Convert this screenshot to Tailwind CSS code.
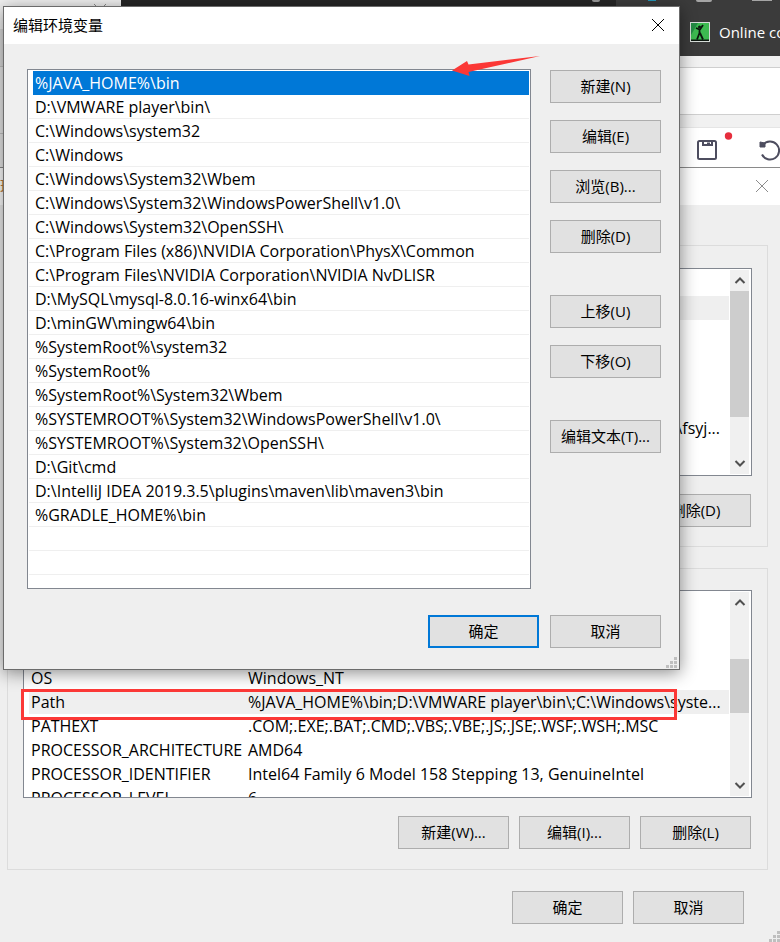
<!DOCTYPE html>
<html lang="zh-CN">
<head>
    <meta charset="UTF-8">
    <meta name="viewport" content="width=device-width, initial-scale=1.0">
    <title>编辑环境变量</title>
    <script src="https://cdn.jsdelivr.net/npm/@tailwindcss/browser@4"></script>
</head>
<body class="font-['Open_Sans','Noto_Sans_CJK_SC',sans-serif] text-[15px] leading-6 text-black">
    <div class="relative h-screen overflow-hidden bg-[#f1f1f1]">

        <!-- Browser behind the dialogs -->
        <div class="h-14 bg-[#3b3b3b] flex flex-col">
            <div class="h-2 flex">
                <div class="w-[121px] bg-[#f1f1f1] pl-[94px] pt-1"><svg class="w-3 h-3" viewBox="0 0 12 12" stroke="#8c8c8c"><path d="M0 0L12 12M12 0L0 12"/></svg></div>
                <div class="w-[495px] bg-[#262626] flex justify-end pr-4"><div class="w-2 h-[2px] rounded-b-full bg-[#9a9a9a]"></div></div>
                <div class="flex-1 flex justify-between pl-8 pr-2">
                    <div class="w-2 h-px bg-[#2596b8]"></div>
                    <div class="w-4 h-[2px] rounded-b bg-[#a5a5a5]"></div>
                    <div class="w-5 h-px bg-[#a5a5a5]"></div>
                </div>
            </div>
            <a href="#" class="flex items-center gap-[9px] ml-auto h-12 w-[90px] text-white whitespace-nowrap overflow-hidden">
                <svg class="w-5 h-5 shrink-0" viewBox="0 0 20 20">
                    <rect x="0.500" y="0.500" width="19" height="19" fill="#3cba50" stroke="#d5dcd8"/>
                    <path d="M1 1h7L1 13z" fill="#238a43"/>
                    <path d="M1 17.500h18V19H1z" fill="#0b160e"/>
                    <circle cx="9.500" cy="5" r="1.500" fill="#0b160e"/>
                    <path d="M9.500 7v5M9.500 7.500L6 6M10 7.500L13 3M9.500 11L7 17.500M10 11l3 6.500" fill="none" stroke="#0b160e" stroke-width="1.800"/>
                </svg>
                <span>Online co</span>
            </a>
        </div>
        <div class="h-3 bg-[#f1f1f1] border-b border-[#cfcfcf]"></div>
        <div class="h-[47px] bg-white border-b border-[#cfcfcf]"></div>
        <div class="mt-3 h-12 bg-white border-t border-[#e5e5e5] flex justify-end">
            <svg class="w-[90px] h-12" viewBox="0 0 90 48" fill="none" stroke="#4d4d5f" stroke-width="2">
                <rect x="8" y="13" width="18" height="18" rx="1.500"/>
                <path d="M13 13v4h9v-4M17 15.500h3"/>
                <circle cx="38.500" cy="8" r="3.700" fill="#e62e3d" stroke="none"/>
                <path d="M73 17a9 9 0 1 1 -1 9.500"/>
                <path d="M70 14l5 1v4h-5z" fill="#4d4d5f" stroke-width="1"/>
            </svg>
        </div>
        <!-- Left edge of the window behind -->
        <div class="absolute left-0 top-0 w-[3px] h-[167px] bg-[#e9e9e9] flex flex-col">
            <div class="h-[29px] bg-[#f1f1f1]"></div>
            <div class="h-[38px] bg-[#dcdcdc] border-b border-[#c4c4c4]"></div>
            <div class="h-[67px] border-b border-[#c4c4c4]"></div>
        </div>

        <!-- Environment variables dialog -->
        <section class="absolute inset-x-0 top-[167px] bottom-0 bg-[#efefef] border-t border-[#8a8a8a] flex flex-col">
            <header class="h-[37px] bg-white flex justify-between items-center pr-3 pb-px">
                <span class="text-[#c07a3a]">环</span>
                <button aria-label="关闭"><svg class="w-3 h-3" viewBox="0 0 12 12" stroke="#8c8c8c"><path d="M0 0L12 12M12 0L0 12"/></svg></button>
            </header>
            <fieldset class="mt-10 ml-[7px] mr-3 h-[302px] border border-[#dcdcdc] px-[15px] pt-[22px]">
                <div class="h-[208px] bg-white border border-[#828790] flex justify-end">
                    <div class="flex-1 pt-[27px]">
                        <div class="h-6 bg-[#efefef]"></div>
                        <div class="pt-24 pr-[9px] text-right text-base">\fsyj...</div>
                    </div>
                    <div class="w-5 my-px mr-[2px] bg-[#f0f0f0] flex flex-col items-center border-l border-white">
                        <svg class="w-5 h-[21px]" viewBox="0 0 20 21" fill="none" stroke="#505050" stroke-width="2"><path d="M5.500 13L10 8.500l4.500 4.500"/></svg>
                        <div class="w-full h-[126px] bg-[#cdcdcd]"></div>
                        <svg class="w-5 h-[21px] mt-auto" viewBox="0 0 20 21" fill="none" stroke="#505050" stroke-width="2"><path d="M5.500 8L10 12.500 14.500 8"/></svg>
                    </div>
                </div>
                <div class="mt-[18px] flex justify-end pr-px">
                    <button class="w-[111px] h-[33px] pb-[2px] bg-[#e1e1e1] border border-[#adadad]">删除(D)</button>
                </div>
            </fieldset>
            <fieldset class="mt-[21px] ml-[7px] mr-3 h-[302px] border border-[#dcdcdc] px-[15px] pt-[21px]">
                <div class="h-[208px] bg-white border border-[#828790] flex">
                    <div class="flex-1 min-w-0 pt-[75px] overflow-hidden">
                        <table class="w-full table-fixed whitespace-nowrap border-separate border-spacing-0 text-base">
                            <colgroup><col class="w-[217px]"><col></colgroup>
                            <tr class="h-6"><td class="border-l-5 border-white pl-[2px]">OS</td><td class="pl-[7px]">Windows_NT</td></tr>
                            <tr class="h-6 bg-[#efefef]"><td class="border-l-5 border-white pl-[2px]">Path</td><td class="pl-[7px]">%JAVA_HOME%\bin;D:\VMWARE player\bin\;C:\Windows\syste...</td></tr>
                            <tr class="h-6"><td class="border-l-5 border-white pl-[2px]">PATHEXT</td><td class="pl-[7px]">.COM;.EXE;.BAT;.CMD;.VBS;.VBE;.JS;.JSE;.WSF;.WSH;.MSC</td></tr>
                            <tr class="h-6"><td class="border-l-5 border-white pl-[2px]">PROCESSOR_ARCHITECTURE</td><td class="pl-[7px]">AMD64</td></tr>
                            <tr class="h-6"><td class="border-l-5 border-white pl-[2px]">PROCESSOR_IDENTIFIER</td><td class="pl-[7px]">Intel64 Family 6 Model 158 Stepping 13, GenuineIntel</td></tr>
                            <tr class="h-6"><td class="border-l-5 border-white pl-[2px]">PROCESSOR_LEVEL</td><td class="pl-[7px]">6</td></tr>
                        </table>
                    </div>
                    <div class="w-5 my-px mr-[2px] bg-[#f0f0f0] flex flex-col items-center border-l border-white">
                        <svg class="w-5 h-[21px]" viewBox="0 0 20 21" fill="none" stroke="#505050" stroke-width="2"><path d="M5.500 13L10 8.500l4.500 4.500"/></svg>
                        <div class="mt-[46px] w-full h-[54px] bg-[#cdcdcd]"></div>
                        <svg class="w-5 h-[21px] mt-auto" viewBox="0 0 20 21" fill="none" stroke="#505050" stroke-width="2"><path d="M5.500 8L10 12.500 14.500 8"/></svg>
                    </div>
                </div>
                <div class="mt-[18px] flex justify-end gap-[10px] pr-px">
                    <button class="w-[111px] h-[33px] pb-[2px] bg-[#e1e1e1] border border-[#adadad]">新建(W)...</button>
                    <button class="w-[111px] h-[33px] pb-[2px] bg-[#e1e1e1] border border-[#adadad]">编辑(I)...</button>
                    <button class="w-[111px] h-[33px] pb-[2px] bg-[#e1e1e1] border border-[#adadad]">删除(L)</button>
                </div>
            </fieldset>
            <footer class="mt-[21px] flex justify-end gap-[10px] pr-9">
                <button class="w-[111px] h-[33px] pb-[2px] bg-[#e1e1e1] border border-[#adadad]">确定</button>
                <button class="w-[111px] h-[33px] pb-[2px] bg-[#e1e1e1] border border-[#adadad]">取消</button>
            </footer>
            <svg class="absolute right-0 bottom-0 w-3 h-3" viewBox="0 0 12 12" fill="#bfbfbf"><path d="M9 1h3v3H9zM5 5h3v3H5zM9 5h3v3H9zM1 9h3v3H1zM5 9h3v3H5zM9 9h3v3H9z"/></svg>
        </section>

        <!-- Edit dialog -->
        <section class="absolute left-[3px] right-[100px] top-[6px] h-[664px] bg-[#efefef] border border-[#6b6b6b] shadow-[0_3px_16px_rgba(0,0,0,0.45)] flex flex-col">
            <header class="h-[37px] bg-white flex justify-between items-center pl-[9px] pr-[15px] pb-[2px]">
                <h1>编辑环境变量</h1>
                <button aria-label="关闭"><svg class="w-3 h-3" viewBox="0 0 12 12" stroke="#000"><path d="M0 0L12 12M12 0L0 12"/></svg></button>
            </header>
            <div class="mt-[25px] pl-[23px] pr-[18px] flex gap-[19px]">
                <ul class="flex-1 h-[520px] bg-white border border-[#828790] pt-px px-px whitespace-nowrap overflow-hidden text-base">
                    <li class="h-6 ml-1 pl-[2px] bg-[#0078d7] text-white">%JAVA_HOME%\bin</li>
                    <li class="h-6 pl-[6px] border-b border-[#efefef]">D:\VMWARE player\bin\</li>
                    <li class="h-6 pl-[6px] border-b border-[#efefef]">C:\Windows\system32</li>
                    <li class="h-6 pl-[6px] border-b border-[#efefef]">C:\Windows</li>
                    <li class="h-6 pl-[6px] border-b border-[#efefef]">C:\Windows\System32\Wbem</li>
                    <li class="h-6 pl-[6px] border-b border-[#efefef]">C:\Windows\System32\WindowsPowerShell\v1.0\</li>
                    <li class="h-6 pl-[6px] border-b border-[#efefef]">C:\Windows\System32\OpenSSH\</li>
                    <li class="h-6 pl-[6px] border-b border-[#efefef]">C:\Program Files (x86)\NVIDIA Corporation\PhysX\Common</li>
                    <li class="h-6 pl-[6px] border-b border-[#efefef]">C:\Program Files\NVIDIA Corporation\NVIDIA NvDLISR</li>
                    <li class="h-6 pl-[6px] border-b border-[#efefef]">D:\MySQL\mysql-8.0.16-winx64\bin</li>
                    <li class="h-6 pl-[6px] border-b border-[#efefef]">D:\minGW\mingw64\bin</li>
                    <li class="h-6 pl-[6px] border-b border-[#efefef]">%SystemRoot%\system32</li>
                    <li class="h-6 pl-[6px] border-b border-[#efefef]">%SystemRoot%</li>
                    <li class="h-6 pl-[6px] border-b border-[#efefef]">%SystemRoot%\System32\Wbem</li>
                    <li class="h-6 pl-[6px] border-b border-[#efefef]">%SYSTEMROOT%\System32\WindowsPowerShell\v1.0\</li>
                    <li class="h-6 pl-[6px] border-b border-[#efefef]">%SYSTEMROOT%\System32\OpenSSH\</li>
                    <li class="h-6 pl-[6px] border-b border-[#efefef]">D:\Git\cmd</li>
                    <li class="h-6 pl-[6px] border-b border-[#efefef]">D:\IntelliJ IDEA 2019.3.5\plugins\maven\lib\maven3\bin</li>
                    <li class="h-6 pl-[6px] border-b border-[#efefef]">%GRADLE_HOME%\bin</li>
                    <li class="h-6 border-b border-[#efefef]"></li>
                    <li class="h-6 border-b border-[#efefef]"></li>
                </ul>
                <div class="w-[111px] pt-px flex flex-col gap-[17px]">
                    <button class="h-[33px] pb-[2px] bg-[#e1e1e1] border border-[#adadad]">新建(N)</button>
                    <button class="h-[33px] pb-[2px] bg-[#e1e1e1] border border-[#adadad]">编辑(E)</button>
                    <button class="h-[33px] pb-[2px] bg-[#e1e1e1] border border-[#adadad]">浏览(B)...</button>
                    <button class="h-[33px] pb-[2px] bg-[#e1e1e1] border border-[#adadad]">删除(D)</button>
                    <button class="mt-[25px] h-[33px] pb-[2px] bg-[#e1e1e1] border border-[#adadad]">上移(U)</button>
                    <button class="h-[33px] pb-[2px] bg-[#e1e1e1] border border-[#adadad]">下移(O)</button>
                    <button class="mt-[25px] h-[33px] pb-[2px] bg-[#e1e1e1] border border-[#adadad]">编辑文本(T)...</button>
                </div>
            </div>
            <footer class="mt-[26px] pr-[18px] flex justify-end gap-[11px]">
                <button class="w-[111px] h-[33px] pb-[2px] bg-[#e1e1e1] border-2 border-[#0078d7]">确定</button>
                <button class="w-[111px] h-[33px] pb-[2px] bg-[#e1e1e1] border border-[#adadad]">取消</button>
            </footer>
            <svg class="absolute right-[2px] bottom-px w-3 h-3" viewBox="0 0 12 12" fill="#bfbfbf"><path d="M9 1h3v3H9zM5 5h3v3H5zM9 5h3v3H9zM1 9h3v3H1zM5 9h3v3H5zM9 9h3v3H9z"/></svg>
        </section>

        <!-- Red annotations -->
        <svg class="absolute left-[452px] top-[55px] w-[88px] h-[22px]" viewBox="0 0 88 22" fill="#fb3836"><path d="M0 15.500L15 6l1.500 3.500L88 1 16.500 17l1 4z"/></svg>
        <div class="absolute left-[21px] right-[103px] top-[689px] h-[31px] border-3 border-[#fb3836]"></div>
    </div>
</body>
</html>
